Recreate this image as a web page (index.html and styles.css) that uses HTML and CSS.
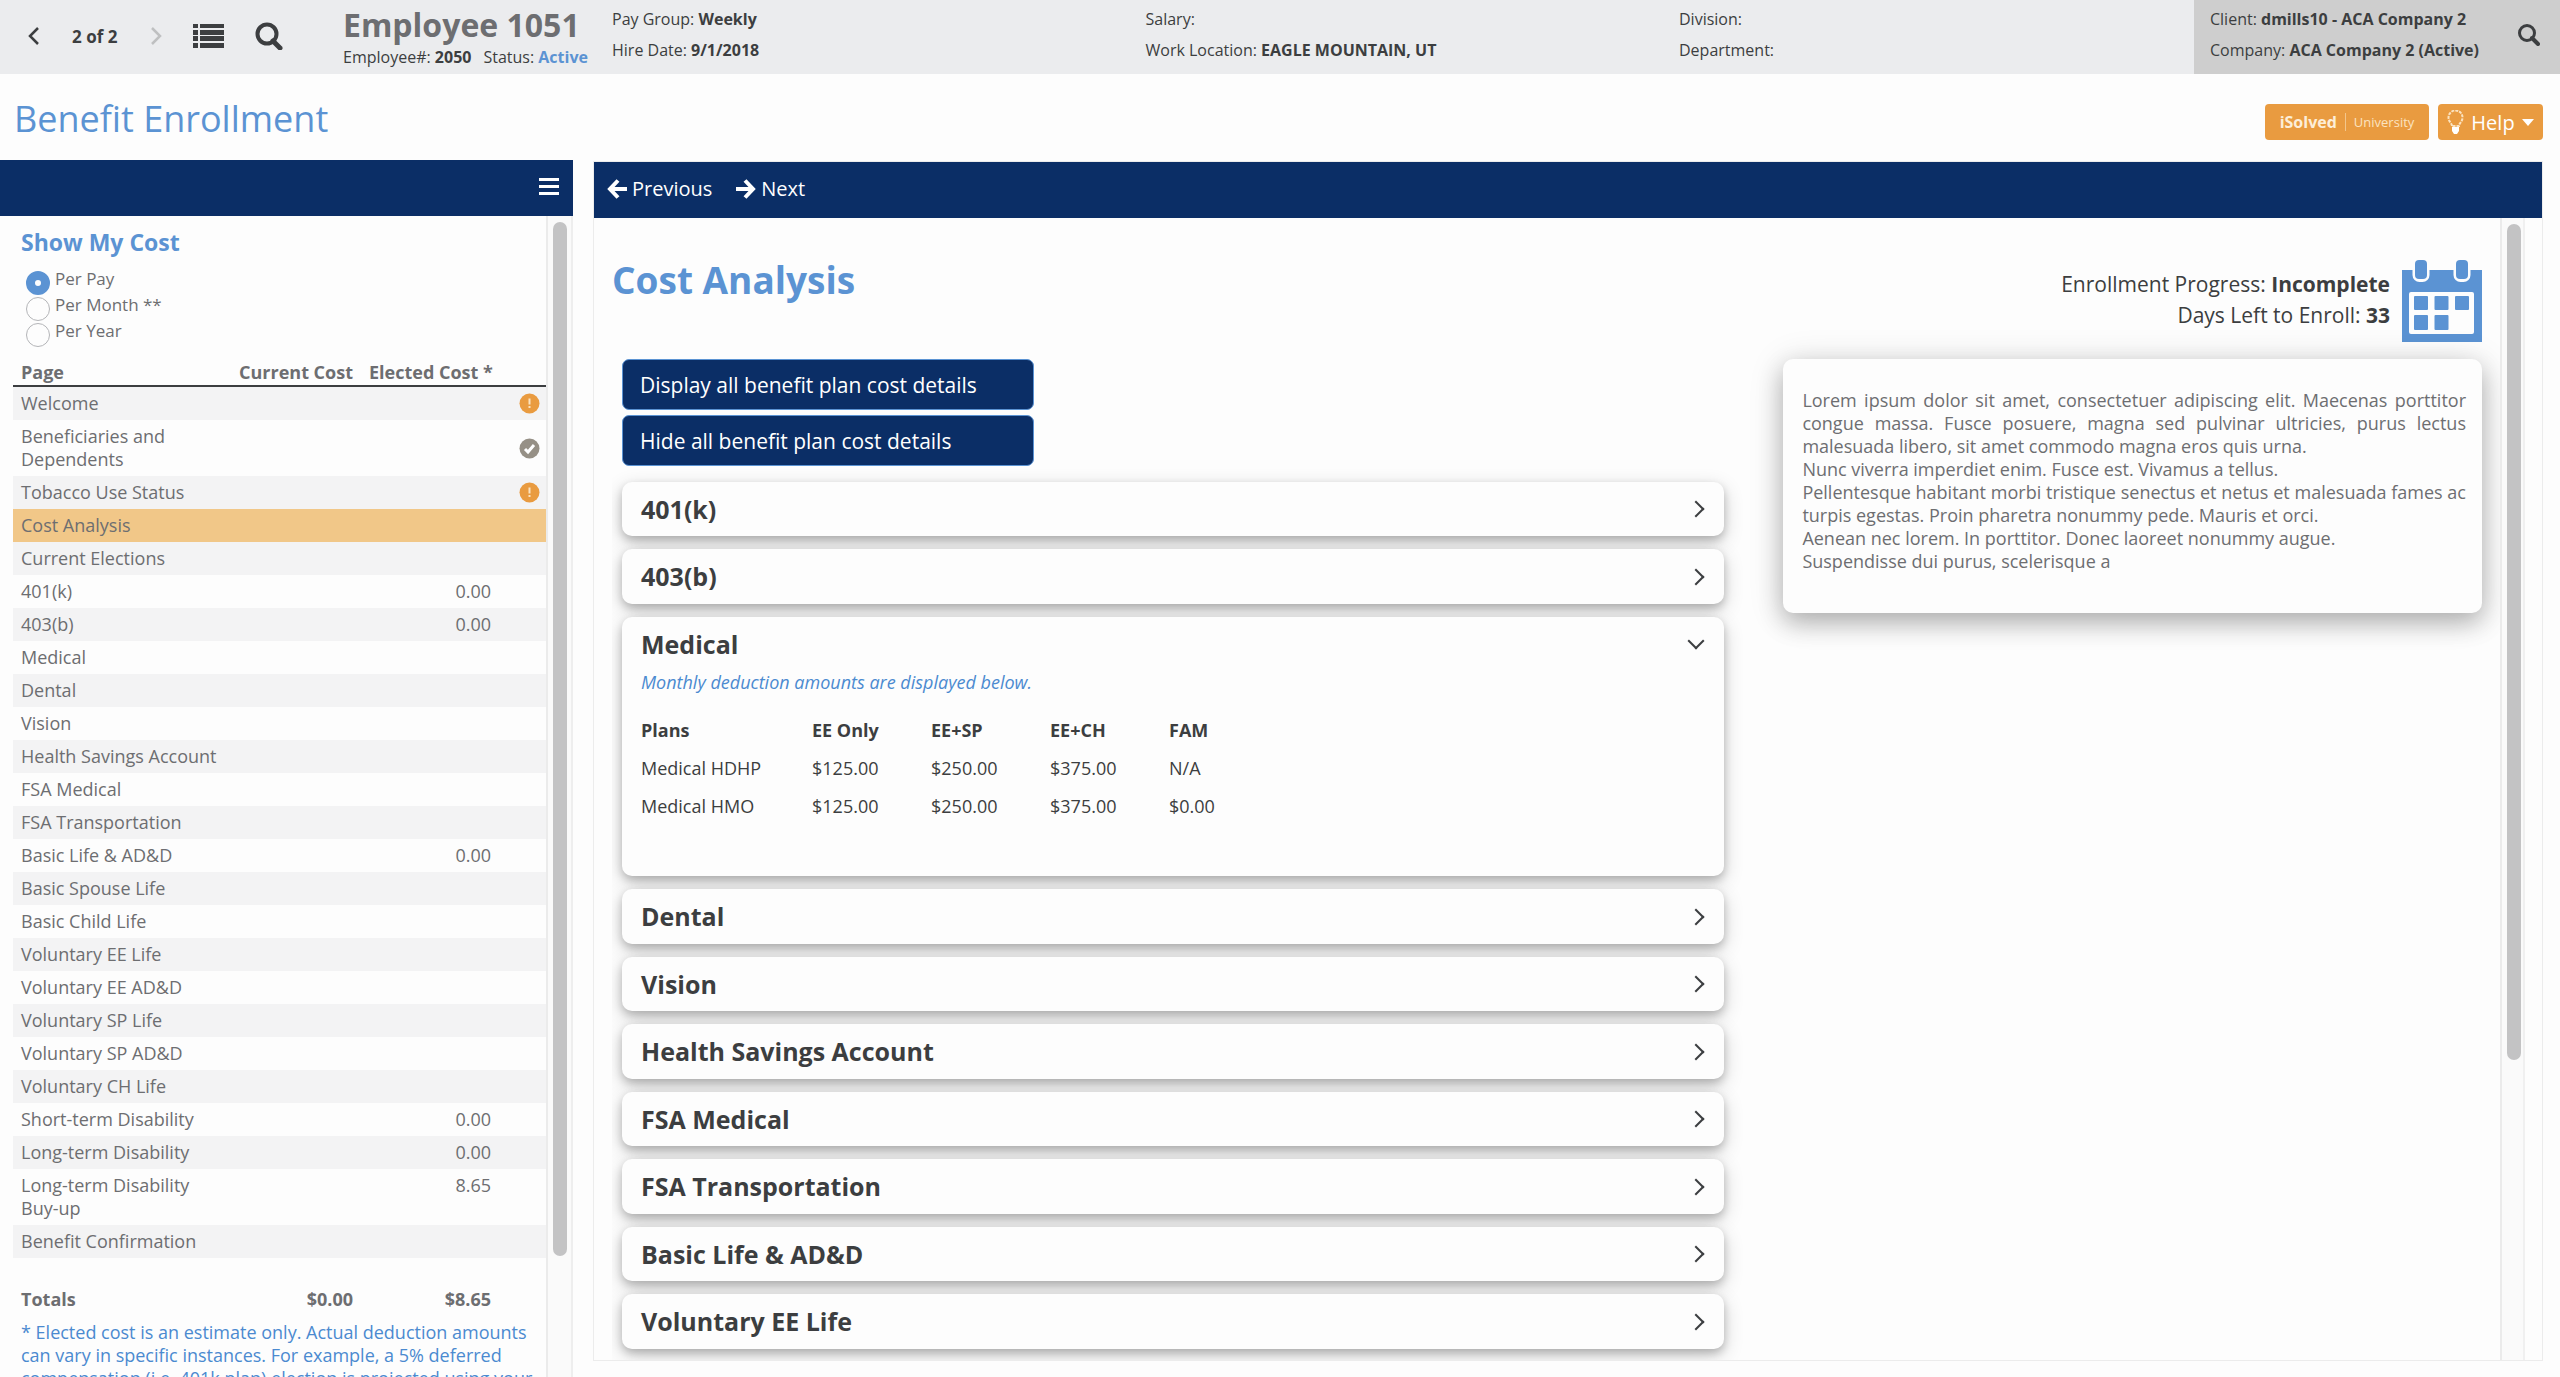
FILE: index.html
```html
<!DOCTYPE html>
<html lang="en">
<head>
    <meta charset="UTF-8">
    <meta name="viewport" content="width=device-width, initial-scale=1.0">
    <title>Benefit Enrollment</title>
    <link rel="stylesheet" href="styles.css">
</head>

<body>
    <header class="top-bar">
        <div class="pager">
            <button type="button" class="icon-button" aria-label="Previous employee">
                <svg width="12" height="18" viewBox="0 0 12 18"><path d="M10 1 2 9l8 8" fill="none" stroke="#3c3e40" stroke-width="2.500"/></svg>
            </button>
            <span class="pager-count">2 of 2</span>
            <button type="button" class="icon-button" aria-label="Next employee" disabled>
                <svg width="12" height="18" viewBox="0 0 12 18"><path d="m2 1 8 8-8 8" fill="none" stroke="#bfc0c1" stroke-width="2.500"/></svg>
            </button>
            <button type="button" class="icon-button list-button" aria-label="Employee list">
                <svg width="31" height="24" viewBox="0 0 31 24" fill="#3c3e40"><path d="M0 0h5v4H0zM7 0h24v4H7zM0 6h5v5H0zM7 6h24v5H7zM0 12h5v5H0zM7 12h24v5H7zM0 19h5v5H0zM7 19h24v5H7z"/></svg>
            </button>
            <button type="button" class="icon-button" aria-label="Find employee">
                <svg width="28" height="28" viewBox="0 0 28 28" fill="none" stroke="#3c3e40" stroke-width="4"><circle cx="12" cy="12" r="9.5"/><path d="m18 19 7 7" stroke-width="5" stroke-linecap="round"/></svg>
            </button>
        </div>
        <div class="employee">
            <div class="employee-name">Employee 1051</div>
            <div class="employee-meta">
                <span>Employee#: <b>2050</b></span>
                <span>Status: <b class="status">Active</b></span>
            </div>
        </div>
        <div class="facts">
            <div>Pay Group: <b>Weekly</b></div>
            <div>Hire Date: <b>9/1/2018</b></div>
        </div>
        <div class="facts">
            <div>Salary:</div>
            <div>Work Location: <b>EAGLE MOUNTAIN, UT</b></div>
        </div>
        <div class="facts facts-last">
            <div>Division:</div>
            <div>Department:</div>
        </div>
        <div class="client">
            <div>
                <div>Client: <b>dmills10 - ACA Company 2</b></div>
                <div>Company: <b>ACA Company 2 (Active)</b></div>
            </div>
            <button type="button" class="icon-button" aria-label="Find company">
                <svg width="22" height="22" viewBox="0 0 22 22" fill="none" stroke="#3c3e40" stroke-width="3"><circle cx="9" cy="9" r="7.5"/><path d="m14 14 6 6" stroke-width="4" stroke-linecap="round"/></svg>
            </button>
        </div>
    </header>

    <div class="title-row">
        <h1>Benefit Enrollment</h1>
        <div class="title-actions">
            <button type="button" class="orange-button university"><b>iSolved</b><span>University</span></button>
            <button type="button" class="orange-button help">
                <svg width="17" height="24" viewBox="0 0 17 24"><path d="M5 16c0-3-3.500-4-3.500-8.500a7 7 0 0 1 14 0C15.500 12 12 13 12 16z" fill="none" stroke="#fbe3c0" stroke-width="2" stroke-dasharray="3 1"/><path d="M5 17h7v4l-2 3H7l-2-3z" fill="#fff"/></svg>
                Help
                <svg width="12" height="7" viewBox="0 0 12 7"><path d="M0 0h12L6 7z" fill="#fff"/></svg>
            </button>
        </div>
    </div>

    <div class="layout">
        <aside class="sidebar">
            <div class="sidebar-bar">
                <button type="button" class="icon-button" aria-label="Toggle menu">
                    <svg width="20" height="17" viewBox="0 0 20 17" fill="#fff"><path d="M0 0h20v3H0zM0 7h20v3H0zM0 14h20v3H0z"/></svg>
                </button>
            </div>
            <div class="sidebar-body">
                <div class="sidebar-content">
                    <h2>Show My Cost</h2>
                    <div class="radios">
                        <label><input type="radio" name="cost" checked><span>Per Pay</span></label>
                        <label><input type="radio" name="cost"><span>Per Month **</span></label>
                        <label><input type="radio" name="cost"><span>Per Year</span></label>
                    </div>
                    <table class="pages">
                        <thead>
                            <tr><th class="col-page">Page</th><th class="col-current">Current Cost</th><th class="col-elected">Elected Cost *</th><th class="col-flag"></th></tr>
                        </thead>
                        <tbody>
                            <tr><td>Welcome</td><td></td><td></td><td class="flag"><svg width="21" height="21" viewBox="0 0 21 21"><circle cx="10.500" cy="10.500" r="10" fill="#e99b40"/><path d="M9.500 5.500h2v6h-2zM9.500 13h2v2h-2z" fill="#fbe3c0"/></svg></td></tr>
                            <tr><td>Beneficiaries and Dependents</td><td></td><td></td><td class="flag"><svg width="21" height="21" viewBox="0 0 21 21"><circle cx="10.500" cy="10.500" r="10" fill="#969086"/><path d="m6 11 3 3 6-7" fill="none" stroke="#fff" stroke-width="3"/></svg></td></tr>
                            <tr><td>Tobacco Use Status</td><td></td><td></td><td class="flag"><svg width="21" height="21" viewBox="0 0 21 21"><circle cx="10.500" cy="10.500" r="10" fill="#e99b40"/><path d="M9.500 5.500h2v6h-2zM9.500 13h2v2h-2z" fill="#fbe3c0"/></svg></td></tr>
                            <tr class="current"><td>Cost Analysis</td><td></td><td></td><td></td></tr>
                            <tr><td>Current Elections</td><td></td><td></td><td></td></tr>
                            <tr><td>401(k)</td><td></td><td>0.00</td><td></td></tr>
                            <tr><td>403(b)</td><td></td><td>0.00</td><td></td></tr>
                            <tr><td>Medical</td><td></td><td></td><td></td></tr>
                            <tr><td>Dental</td><td></td><td></td><td></td></tr>
                            <tr><td>Vision</td><td></td><td></td><td></td></tr>
                            <tr><td>Health Savings Account</td><td></td><td></td><td></td></tr>
                            <tr><td>FSA Medical</td><td></td><td></td><td></td></tr>
                            <tr><td>FSA Transportation</td><td></td><td></td><td></td></tr>
                            <tr><td>Basic Life &amp; AD&amp;D</td><td></td><td>0.00</td><td></td></tr>
                            <tr><td>Basic Spouse Life</td><td></td><td></td><td></td></tr>
                            <tr><td>Basic Child Life</td><td></td><td></td><td></td></tr>
                            <tr><td>Voluntary EE Life</td><td></td><td></td><td></td></tr>
                            <tr><td>Voluntary EE AD&amp;D</td><td></td><td></td><td></td></tr>
                            <tr><td>Voluntary SP Life</td><td></td><td></td><td></td></tr>
                            <tr><td>Voluntary SP AD&amp;D</td><td></td><td></td><td></td></tr>
                            <tr><td>Voluntary CH Life</td><td></td><td></td><td></td></tr>
                            <tr><td>Short-term Disability</td><td></td><td>0.00</td><td></td></tr>
                            <tr><td>Long-term Disability</td><td></td><td>0.00</td><td></td></tr>
                            <tr><td>Long-term Disability Buy-up</td><td></td><td>8.65</td><td></td></tr>
                            <tr><td>Benefit Confirmation</td><td></td><td></td><td></td></tr>
                        </tbody>
                        <tfoot>
                            <tr><td>Totals</td><td>$0.00</td><td>$8.65</td><td></td></tr>
                        </tfoot>
                    </table>
                    <p class="footnote">* Elected cost is an estimate only. Actual deduction amounts can vary in specific instances. For example, a 5% deferred compensation (i.e. 401k plan) election is projected using your</p>
                </div>
                <div class="track"><div class="thumb thumb-side"></div></div>
            </div>
        </aside>

        <main class="panel">
            <nav class="panel-bar">
                <a href="#"><svg width="20" height="20" viewBox="0 0 20 20" fill="none" stroke="#fff" stroke-width="4"><path d="M11 1.500 3 10l8 8.500M3 10h17"/></svg>Previous</a>
                <a href="#"><svg width="20" height="20" viewBox="0 0 20 20" fill="none" stroke="#fff" stroke-width="4"><path d="m9 1.500 8 8.500-8 8.500M17 10H0"/></svg>Next</a>
            </nav>
            <div class="panel-body">
                <div class="panel-content">
                    <div class="panel-head">
                        <h2>Cost Analysis</h2>
                        <div class="progress">
                            <div>Enrollment Progress: <b>Incomplete</b></div>
                            <div>Days Left to Enroll: <b>33</b></div>
                        </div>
                        <svg class="calendar" width="80" height="82" viewBox="0 0 80 82">
                            <path d="M0 10h80v72H0z" fill="#5b93d3"/>
                            <rect x="10.500" y="-4" width="17" height="26" rx="7" fill="#fdfdfd"/>
                            <rect x="51.500" y="-4" width="17" height="26" rx="7" fill="#fdfdfd"/>
                            <rect x="13" y="0" width="12" height="19" rx="4" fill="#5b93d3"/>
                            <rect x="54" y="0" width="12" height="19" rx="4" fill="#5b93d3"/>
                            <rect x="7" y="32" width="65" height="42" rx="2" fill="#fdfdfd"/>
                            <g fill="#5b93d3"><rect x="12" y="36" width="14" height="14" rx="1"/><rect x="32.500" y="36" width="14" height="14" rx="1"/><rect x="53" y="36" width="14" height="14" rx="1"/><rect x="12" y="55" width="14" height="15" rx="1"/><rect x="32.500" y="55" width="14" height="15" rx="1"/></g>
                        </svg>
                    </div>
                    <div class="columns">
                        <div class="plans">
                            <button type="button" class="navy-button" id="showAll">Display all benefit plan cost details</button>
                            <button type="button" class="navy-button" id="hideAll">Hide all benefit plan cost details</button>
                            <div class="accordion">
                                <details class="card"><summary>401(k)</summary></details>
                                <details class="card"><summary>403(b)</summary></details>
                                <details class="card" open>
                                    <summary>Medical</summary>
                                    <div class="card-body">
                                        <p class="note">Monthly deduction amounts are displayed below.</p>
                                        <table class="costs">
                                            <thead>
                                                <tr><th class="col-plan">Plans</th><th>EE Only</th><th>EE+SP</th><th>EE+CH</th><th>FAM</th></tr>
                                            </thead>
                                            <tbody>
                                                <tr><td>Medical HDHP</td><td>$125.00</td><td>$250.00</td><td>$375.00</td><td>N/A</td></tr>
                                                <tr><td>Medical HMO</td><td>$125.00</td><td>$250.00</td><td>$375.00</td><td>$0.00</td></tr>
                                            </tbody>
                                        </table>
                                    </div>
                                </details>
                                <details class="card"><summary>Dental</summary></details>
                                <details class="card"><summary>Vision</summary></details>
                                <details class="card"><summary>Health Savings Account</summary></details>
                                <details class="card"><summary>FSA Medical</summary></details>
                                <details class="card"><summary>FSA Transportation</summary></details>
                                <details class="card"><summary>Basic Life &amp; AD&amp;D</summary></details>
                                <details class="card"><summary>Voluntary EE Life</summary></details>
                            </div>
                        </div>
                        <div class="info">
                            <p>Lorem ipsum dolor sit amet, consectetuer adipiscing elit. Maecenas porttitor congue massa. Fusce posuere, magna sed pulvinar ultricies, purus lectus malesuada libero, sit amet commodo magna eros quis urna.</p>
                            <p>Nunc viverra imperdiet enim. Fusce est. Vivamus a tellus.</p>
                            <p>Pellentesque habitant morbi tristique senectus et netus et malesuada fames ac turpis egestas. Proin pharetra nonummy pede. Mauris et orci.</p>
                            <p>Aenean nec lorem. In porttitor. Donec laoreet nonummy augue.</p>
                            <p>Suspendisse dui purus, scelerisque a</p>
                        </div>
                    </div>
                </div>
                <div class="track"><div class="thumb thumb-main"></div></div>
            </div>
        </main>
    </div>

    <script>
        function setCards(open) {
            document.querySelectorAll('.card').forEach(function(card) {
                card.open = open;
            });
        }

        document.getElementById('showAll').addEventListener('click', function() { setCards(true); });
        document.getElementById('hideAll').addEventListener('click', function() { setCards(false); });
    </script>
</body>
</html>
```

FILE: styles.css
```css
* {
    margin: 0;
    padding: 0;
    box-sizing: border-box;
}

body {
    display: flex;
    flex-direction: column;
    height: 100vh;
    overflow: hidden;
    background-color: #fdfdfd;
    color: #3c3e40;
    font-family: 'Open Sans', sans-serif;
    font-size: 18px;
    line-height: 23px;
}

button {
    font-family: inherit;
    cursor: pointer;
}

svg {
    display: block;
    flex: none;
}

.icon-button {
    background: none;
    border: none;
}

/* top bar */
.top-bar {
    display: flex;
    flex: none;
    height: 74px;
    background-color: #ebecee;
    font-size: 16px;
    line-height: 31px;
}

.pager {
    display: flex;
    align-items: center;
    width: 343px;
    padding: 0 0 2px 28px;
}

.pager-count {
    margin: 0 33px 0 32px;
    font-size: 17px;
    font-weight: 700;
}

.list-button {
    margin: 0 31px;
}

.employee {
    width: 269px;
}

.employee-name {
    padding-top: 3px;
    color: #6d6e71;
    font-size: 32px;
    font-weight: 700;
    line-height: 43px;
}

.employee-meta {
    display: flex;
    gap: 12px;
    line-height: 22px;
}

.status {
    color: #5b93d3;
}

.facts {
    flex: 1;
    padding-top: 4px;
}

.facts-last {
    flex: 0 0 515px;
}

.client {
    display: flex;
    justify-content: space-between;
    align-items: center;
    width: 366px;
    padding: 0 20px 4px 16px;
    background-color: #cecece;
}

/* page title */
.title-row {
    display: flex;
    flex: none;
    justify-content: space-between;
    height: 86px;
    padding: 0 17px 0 14px;
}

.title-row h1 {
    padding-top: 20px;
    color: #5b93d3;
    font-size: 36px;
    font-weight: 400;
    line-height: 49px;
}

.title-actions {
    display: flex;
    align-items: flex-start;
    gap: 9px;
    padding-top: 30px;
}

.orange-button {
    display: flex;
    align-items: center;
    justify-content: center;
    height: 36px;
    background-color: #e99b40;
    border: none;
    border-radius: 4px;
    color: #ffffff;
}

.university {
    width: 164px;
    color: #fdeed8;
    font-size: 16px;
}

.university span {
    margin-left: 8px;
    padding-left: 8px;
    border-left: 1px solid #f3c68c;
    color: #fbe3c0;
    font-size: 13px;
}

.help {
    gap: 7px;
    width: 105px;
    font-size: 20px;
}

/* two column layout */
.layout {
    display: flex;
    flex: 1;
    min-height: 0;
    gap: 20px;
    padding-right: 17px;
}

.sidebar {
    display: flex;
    flex-direction: column;
    width: 573px;
}

.sidebar-bar {
    display: flex;
    flex: none;
    justify-content: flex-end;
    align-items: center;
    height: 56px;
    padding: 0 14px 4px;
    background-color: #0b2e66;
}

.sidebar-body {
    display: flex;
    flex: 1;
    min-height: 0;
    overflow: hidden;
    border-right: 2px solid #eeeeee;
}

.sidebar-content {
    flex: 1;
    padding-left: 13px;
    color: #6d6e71;
}

.sidebar-content h2 {
    padding: 11px 8px 10px;
    color: #5b93d3;
    font-size: 23px;
    line-height: 30px;
}

.radios {
    padding: 4px 0 0 13px;
    font-size: 17px;
}

.radios label {
    display: flex;
    gap: 5px;
    height: 26px;
}

.radios span {
    line-height: 16px;
}

.radios input {
    appearance: none;
    width: 24px;
    height: 24px;
    border: 1px solid #b4b5b8;
    border-radius: 50%;
    background-color: #fdfdfd;
}

.radios input:checked {
    border: 9px solid #5b93d3;
}

.pages {
    width: 100%;
    margin-top: 10px;
    border-collapse: collapse;
    table-layout: fixed;
}

.pages th {
    height: 27px;
    padding: 0 8px;
    border-bottom: 2px solid #3c3e40;
    text-align: right;
    white-space: nowrap;
}

.pages .col-page {
    width: 212px;
    text-align: left;
}

.pages .col-current {
    width: 136px;
}

.pages .col-elected {
    width: 138px;
}

.pages td {
    padding: 5px 8px;
    text-align: right;
    vertical-align: top;
}

.pages td:first-child {
    text-align: left;
}

.pages .flag {
    padding: 0 6px 0 20px;
    vertical-align: middle;
}

.pages tbody tr:nth-child(odd) {
    background-color: #f3f3f4;
}

.pages tbody .current,
.pages tbody .current:nth-child(even) {
    background-color: #f1c788;
}

.pages tfoot td {
    padding: 30px 8px 10px;
    font-weight: 700;
}

.footnote {
    padding: 0 4px 0 8px;
    color: #4b8ad0;
}

/* scroll bars */
.track {
    flex: none;
    width: 25px;
    padding: 6px 5px;
    border-left: 2px solid #ebebeb;
    background-color: #fafafa;
}

.thumb {
    width: 14px;
    border-radius: 7px;
    background-color: #c3c3c4;
}

.thumb-side {
    height: 90%;
}

.thumb-main {
    height: 74%;
}

/* main panel */
.panel {
    display: flex;
    flex: 1;
    flex-direction: column;
    min-width: 0;
    margin: 1px 0 16px;
    border: 1px solid #ececec;
}

.panel-bar {
    display: flex;
    flex: none;
    align-items: center;
    gap: 24px;
    height: 56px;
    padding: 0 13px 3px;
    background-color: #0b2e66;
    font-size: 20px;
}

.panel-bar a {
    display: flex;
    align-items: center;
    gap: 5px;
    color: #ffffff;
    text-decoration: none;
}

.panel-body {
    display: flex;
    flex: 1;
    min-height: 0;
    padding: 0 17px 0 18px;
}

.panel-body .track {
    border-right: 2px solid #f0f0f0;
}

.panel-content {
    flex: 1;
    min-width: 0;
    overflow: hidden;
}

.panel-head {
    display: flex;
    height: 141px;
    padding: 42px 18px 0 0;
}

.panel-head h2 {
    flex: 1;
    color: #5b93d3;
    font-size: 37px;
    line-height: 40px;
}

.progress {
    padding: 9px 12px 0 0;
    font-size: 21px;
    line-height: 31px;
    text-align: right;
}

.columns {
    display: grid;
    grid-template-columns: 1103fr 699fr;
    align-items: start;
    gap: 59px;
    padding: 0 18px 0 10px;
}

.navy-button {
    display: block;
    width: 412px;
    height: 51px;
    margin-bottom: 5px;
    padding: 0 17px;
    border: 1px solid #5b93d3;
    border-radius: 7px;
    background-color: #0b2e66;
    color: #ffffff;
    font-size: 21px;
    text-align: left;
}

.accordion {
    display: flex;
    flex-direction: column;
    gap: 13px;
    padding-top: 11px;
}

.card {
    border-radius: 10px;
    background-color: #fdfdfd;
    box-shadow: 0 4px 8px rgba(0, 0, 0, 0.2), 0 6px 20px rgba(0, 0, 0, 0.19);
}

.card summary {
    display: flex;
    align-items: center;
    justify-content: space-between;
    height: 54px;
    padding: 0 22px 0 19px;
    font-size: 25px;
    font-weight: 700;
    list-style: none;
    cursor: pointer;
}

.card summary::after {
    content: "";
    width: 10px;
    height: 10px;
    border: solid #3c3e40;
    border-width: 2px 2px 0 0;
    transform: rotate(45deg);
}

.card[open] summary::after {
    transform: translateY(-3px) rotate(135deg);
}

/* every second closed card is a pixel taller */
.card:nth-child(even) summary {
    height: 55px;
}

.card-body {
    padding: 0 19px 51px;
}

.note {
    margin-bottom: 17px;
    color: #4b8ad0;
    font-style: italic;
}

.costs {
    border-collapse: collapse;
}

.costs th,
.costs td {
    width: 119px;
    height: 38px;
    text-align: left;
}

.costs .col-plan {
    width: 171px;
}

.info {
    padding: 30px 16px 40px 19px;
    border-radius: 10px;
    background-color: #fdfdfd;
    box-shadow: 0 10px 24px rgba(0, 0, 0, 0.24), 0 4px 36px rgba(0, 0, 0, 0.14);
    color: #6d6e71;
    text-align: justify;
}
```
